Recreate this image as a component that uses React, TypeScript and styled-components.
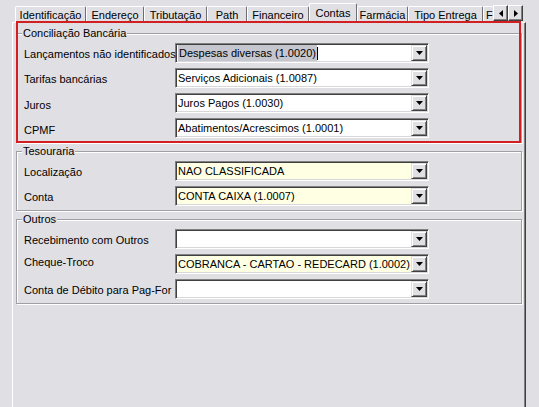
import React from 'react';
import styled, { createGlobalStyle } from 'styled-components';

const FACE = '#e0dfe3';

const Global = createGlobalStyle`
  html, body { margin: 0; padding: 0; background: ${FACE}; }
  body {
    font-family: "Liberation Sans", Arial, sans-serif;
    font-size: 11px;
    color: #000;
  }
`;

const Window = styled.div`
  position: relative;
  width: 539px;
  height: 407px;
  overflow: hidden;
  background: ${FACE};
`;

const TabStrip = styled.div`
  display: flex;
  align-items: flex-end;
  height: 22px;
  padding-left: 15px;
  position: relative;
  z-index: 1;
`;

const TabViewport = styled.div`
  display: flex;
  align-items: flex-end;
  width: 478px;
  height: 22px;
`;

const Tab = styled.div<{ $w: number; $active?: boolean; $clip?: boolean }>`
  box-sizing: border-box;
  flex: none;
  width: ${p => p.$w}px;
  height: ${p => (p.$active ? 20 : 16)}px;
  margin-bottom: ${p => (p.$active ? -1 : 0)}px;
  display: flex;
  align-items: ${p => (p.$active ? 'flex-start' : 'center')};
  justify-content: ${p => (p.$clip ? 'flex-start' : 'center')};
  padding-top: ${p => (p.$active ? 3 : 0)}px;
  padding-left: ${p => (p.$clip ? 2 : 0)}px;
  white-space: nowrap;
  background: ${FACE};
  border-top: 1px solid #fff;
  border-left: 1px solid #fff;
  border-right: ${p => (p.$clip ? 'none' : '1px solid #6e6e72')};
  border-radius: 2px 2px 0 0;
`;

const ArrowGroup = styled.div`
  display: flex;
  align-self: flex-start;
  margin-top: 5px;
`;

const ArrowButton = styled.div`
  box-sizing: border-box;
  width: 15px;
  height: 16px;
  display: flex;
  align-items: center;
  justify-content: center;
  background: ${FACE};
  border-top: 1px solid #fff;
  border-left: 1px solid #fff;
  border-right: 1px solid #404040;
  border-bottom: 1px solid #404040;
  box-shadow: inset -1px -1px #808080;
`;

const Page = styled.div`
  box-sizing: border-box;
  margin-left: 12px;
  width: 514px;
  height: 385px;
  border-top: 1px solid #fff;
  border-left: 1px solid #fff;
  border-right: 1px solid #404040;
  box-shadow: inset -1px 0 #808080;
  padding: 4px 3px 0 3px;
  display: flex;
  flex-direction: column;
  gap: 2px;
`;

const Group = styled.fieldset`
  margin: 0;
  min-width: 0;
  padding: 3px 0 4px 0;
  border: 1px solid #a0a0a4;
  box-shadow: inset 1px 1px #fff, 1px 1px #fff;
  display: flex;
  flex-direction: column;
  gap: 5px;
`;

const Caption = styled.legend`
  margin-left: 5px;
  padding: 0 1px;
  line-height: 13px;
  background: ${FACE};
`;

const Row = styled.div`
  display: flex;
  align-items: center;
  height: 20px;
  padding-left: 7px;
`;

const Label = styled.span<{ $shift?: number }>`
  width: 151px;
  flex: none;
  white-space: nowrap;
  position: relative;
  top: ${p => p.$shift ?? 1}px;
`;

const Combo = styled.div<{ $bg: string }>`
  box-sizing: border-box;
  width: 254px;
  height: 20px;
  display: flex;
  align-items: stretch;
  background: ${p => p.$bg};
  border-top: 1px solid #808080;
  border-left: 1px solid #808080;
  border-bottom: 1px solid #fff;
  border-right: 1px solid #fff;
  box-shadow: inset 1px 1px #404040, inset -1px -1px #d8d8dc;
  padding: 1px;
`;

const Value = styled.div`
  flex: 1;
  display: flex;
  align-items: center;
  padding-left: 1px;
  white-space: nowrap;
  overflow: hidden;
`;

const Selected = styled.span`
  display: flex;
  align-items: center;
  height: 100%;
  padding: 0 1px;
  background: #c6c6ce;
`;

const Caret = styled.span`
  width: 1px;
  height: 13px;
  background: #000;
`;

const DropButton = styled.div`
  box-sizing: border-box;
  width: 16px;
  flex: none;
  display: flex;
  align-items: center;
  justify-content: center;
  background: ${FACE};
  border-top: 1px solid ${FACE};
  border-left: 1px solid ${FACE};
  border-right: 1px solid #404040;
  border-bottom: 1px solid #404040;
  box-shadow: inset 1px 1px #fff, inset -1px -1px #808080;
`;

const Annotation = styled.div`
  position: absolute;
  left: 16px;
  top: 21px;
  width: 505px;
  height: 122px;
  box-sizing: border-box;
  border: 2px solid #d21f22;
  pointer-events: none;
  z-index: 2;
`;

const Arrow = ({ dir }: { dir: 'down' | 'left' | 'right' }) => {
  if (dir === 'down')
    return (
      <svg width="7" height="4" viewBox="0 0 7 4">
        <path d="M0 0H7L3.5 4Z" fill="#000" />
      </svg>
    );
  if (dir === 'left')
    return (
      <svg width="4" height="7" viewBox="0 0 4 7">
        <path d="M4 0V7L0 3.5Z" fill="#000" />
      </svg>
    );
  return (
    <svg width="4" height="7" viewBox="0 0 4 7">
      <path d="M0 0V7L4 3.5Z" fill="#000" />
    </svg>
  );
};

type Field = {
  label: string;
  value: string;
  bg: string;
  selected?: boolean;
  shift?: number;
};

const WHITE = '#ffffff';
const YELLOW = '#ffffe4';

const groups: { title: string; fields: Field[] }[] = [
  {
    title: 'Conciliação Bancária',
    fields: [
      { label: 'Lançamentos não identificados', value: 'Despesas diversas (1.0020)', bg: WHITE, selected: true },
      { label: 'Tarifas bancárias', value: 'Serviços Adicionais (1.0087)', bg: WHITE },
      { label: 'Juros', value: 'Juros Pagos (1.0030)', bg: WHITE, shift: 2 },
      { label: 'CPMF', value: 'Abatimentos/Acrescimos (1.0001)', bg: WHITE, shift: 2 },
    ],
  },
  {
    title: 'Tesouraria',
    fields: [
      { label: 'Localização', value: 'NAO CLASSIFICADA', bg: YELLOW },
      { label: 'Conta', value: 'CONTA CAIXA (1.0007)', bg: YELLOW },
    ],
  },
  {
    title: 'Outros',
    fields: [
      { label: 'Recebimento com Outros', value: '', bg: WHITE },
      { label: 'Cheque-Troco', value: 'COBRANCA - CARTAO - REDECARD (1.0002)', bg: YELLOW, shift: -2 },
      { label: 'Conta de Débito para Pag-For', value: '', bg: WHITE },
    ],
  },
];

const tabs: { label: string; w: number; active?: boolean; clip?: boolean }[] = [
  { label: 'Identificação', w: 71 },
  { label: 'Endereço', w: 58 },
  { label: 'Tributação', w: 63 },
  { label: 'Path', w: 40 },
  { label: 'Financeiro', w: 62 },
  { label: 'Contas', w: 48, active: true },
  { label: 'Farmácia', w: 51 },
  { label: 'Tipo Entrega', w: 75 },
  { label: 'F', w: 10, clip: true },
];

export default function App() {
  return (
    <>
      <Global />
      <Window>
        <TabStrip>
          <TabViewport>
            {tabs.map(t => (
              <Tab key={t.label} $w={t.w} $active={t.active} $clip={t.clip}>
                {t.label}
              </Tab>
            ))}
          </TabViewport>
          <ArrowGroup>
            <ArrowButton>
              <Arrow dir="left" />
            </ArrowButton>
            <ArrowButton>
              <Arrow dir="right" />
            </ArrowButton>
          </ArrowGroup>
        </TabStrip>
        <Page>
          {groups.map(g => (
            <Group key={g.title}>
              <Caption>{g.title}</Caption>
              {g.fields.map(f => (
                <Row key={f.label}>
                  <Label $shift={f.shift}>{f.label}</Label>
                  <Combo $bg={f.bg}>
                    <Value>
                      {f.selected ? (
                        <>
                          <Selected>{f.value}</Selected>
                          <Caret />
                        </>
                      ) : (
                        f.value
                      )}
                    </Value>
                    <DropButton>
                      <Arrow dir="down" />
                    </DropButton>
                  </Combo>
                </Row>
              ))}
            </Group>
          ))}
        </Page>
        <Annotation />
      </Window>
    </>
  );
}
